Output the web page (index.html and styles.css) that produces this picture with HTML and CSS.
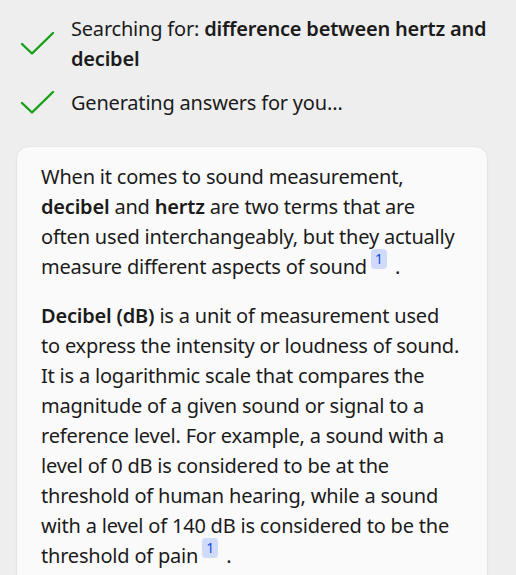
FILE: index.html
```html
<!DOCTYPE html>
<html lang="en">
<head>
<meta charset="utf-8">
<title>Chat answer</title>
<link rel="stylesheet" href="styles.css">
</head>
<body>
<main class="page">
  <ul class="status-list">
    <li class="status">
      <svg class="check" viewBox="0 0 36 32" width="36" height="32" aria-hidden="true"><path d="M2 16 L12 25.5 L33 5" fill="none" stroke="currentColor" stroke-width="2.4" stroke-linecap="round" stroke-linejoin="round"/></svg>
      <span class="status-text">Searching for: <b>difference between hertz and decibel</b></span>
    </li>
    <li class="status">
      <svg class="check" viewBox="0 0 36 32" width="36" height="32" aria-hidden="true"><path d="M2 16 L12 25.5 L33 5" fill="none" stroke="currentColor" stroke-width="2.4" stroke-linecap="round" stroke-linejoin="round"/></svg>
      <span class="status-text">Generating answers for you…</span>
    </li>
  </ul>
  <article class="card">
    <p class="para">When it comes to sound measurement, <b>decibel</b> and <b>hertz</b> are two terms that are often used interchangeably, but they actually measure different aspects of <span class="nowrap">sound<sup class="cite">1</sup>.</span></p>
    <p class="para"><b>Decibel (dB)</b> is a unit of measurement used to&nbsp;express the intensity or loudness of sound. It is a logarithmic scale that compares the magnitude of a given sound or signal to a reference level. For example, a sound with a level of 0 dB is considered to be at the threshold of human hearing, while a sound with a level of 140 dB is considered to be the threshold of <span class="nowrap">pain<sup class="cite">1</sup>.</span></p>
  </article>
</main>
</body>
</html>
```
FILE: styles.css
```css
html, body {
  margin: 0;
  padding: 0;
  background: #eeeeee;
}
body {
  font-family: "Noto Sans", "Open Sans", sans-serif;
  font-size: 20px;
  line-height: 30px;
  letter-spacing: -0.2px;
  color: #1b1b1b;
  overflow: hidden;
}
.page {
  padding: 14px 0 0 17px;
}
.status-list {
  list-style: none;
  margin: 0;
  padding: 0 6px 0 0;
  display: flex;
  flex-direction: column;
  gap: 13px;
}
.status {
  display: flex;
  align-items: center;
  gap: 15px;
  padding-left: 3px;
}
.check {
  flex: none;
  color: #16a016;
}
.status-text b {
  font-weight: 600;
}
.card {
  margin: 28px 29px 0 0;
  background: #fafafa;
  border-radius: 12px;
  box-shadow: 0 0 2px rgba(0,0,0,0.08), 0 1px 3px rgba(0,0,0,0.06);
  padding: 15px 20px 40px 24px;
}
.para {
  margin: 0 0 19px;
}
.para b {
  font-weight: 600;
}
.nowrap {
  white-space: nowrap;
}
.cite {
  display: inline-block;
  position: relative;
  top: -10px;
  width: 16px;
  height: 20px;
  margin: 0 8px 0 4px;
  border-radius: 4px;
  background: #d0dbfa;
  color: #174ae0;
  font-size: 14px;
  line-height: 20px;
  letter-spacing: 0;
  text-align: center;
  vertical-align: baseline;
}
```
